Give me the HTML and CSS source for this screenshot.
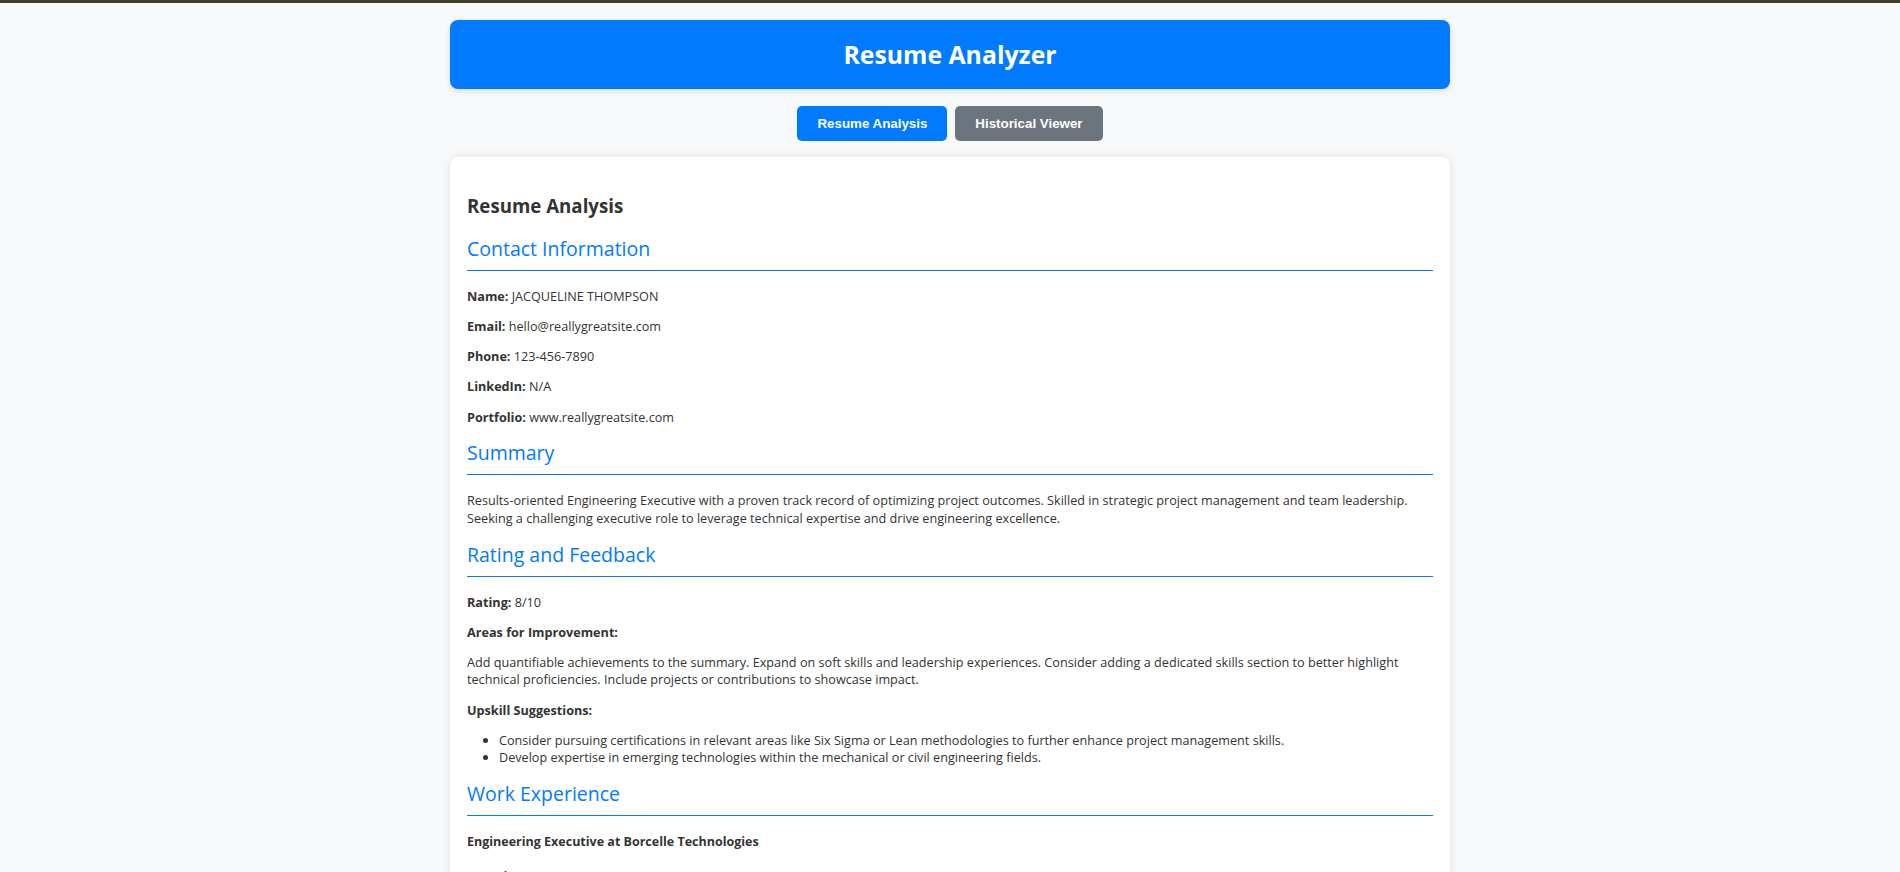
FILE: index.html
```html
<!DOCTYPE html>
<html lang="en">
<head>
<meta charset="utf-8">
<title>Resume Analyzer</title>
<link rel="stylesheet" href="styles.css">
</head>
<body>
<div class="topbar"></div>
<div class="container">
  <header class="app-header">
    <h1>Resume Analyzer</h1>
  </header>
  <nav class="tabs">
    <button class="tab tab-active">Resume Analysis</button>
    <button class="tab tab-muted">Historical Viewer</button>
  </nav>
  <main class="card">
    <h2 class="card-title">Resume Analysis</h2>

    <h3 class="section-title">Contact Information</h3>
    <p><strong>Name:</strong> JACQUELINE THOMPSON</p>
    <p><strong>Email:</strong> hello@reallygreatsite.com</p>
    <p><strong>Phone:</strong> 123-456-7890</p>
    <p><strong>LinkedIn:</strong> N/A</p>
    <p><strong>Portfolio:</strong> www.reallygreatsite.com</p>

    <h3 class="section-title">Summary</h3>
    <p>Results-oriented Engineering Executive with a proven track record of optimizing project outcomes. Skilled in strategic project management and team leadership. Seeking a challenging executive role to leverage technical expertise and drive engineering excellence.</p>

    <h3 class="section-title">Rating and Feedback</h3>
    <p><strong>Rating:</strong> 8/10</p>
    <p><strong>Areas for Improvement:</strong></p>
    <p>Add quantifiable achievements to the summary. Expand on soft skills and leadership experiences. Consider adding a dedicated skills section to better highlight technical proficiencies. Include projects or contributions to showcase impact.</p>
    <p><strong>Upskill Suggestions:</strong></p>
    <ul>
      <li>Consider pursuing certifications in relevant areas like Six Sigma or Lean methodologies to further enhance project management skills.</li>
      <li>Develop expertise in emerging technologies within the mechanical or civil engineering fields.</li>
    </ul>

    <h3 class="section-title">Work Experience</h3>
    <h4 class="job-title">Engineering Executive at Borcelle Technologies</h4>
    <p><strong>Duration:</strong> Jan 2020 - Present</p>
    <ul>
      <li>Led cross-functional engineering teams to deliver projects on time and within budget.</li>
      <li>Implemented process improvements that increased project efficiency.</li>
    </ul>
  </main>
</div>
</body>
</html>
```
FILE: styles.css
```css
* { box-sizing: border-box; }

html, body {
  margin: 0;
  padding: 0;
}

body {
  background: #f8f9fa;
  color: #333;
  font-family: "Open Sans", "Noto Sans", sans-serif;
  font-size: 12.65px;
  line-height: 17.3px;
}

.topbar {
  height: 3px;
  background: #433e27;
}

.container {
  width: 1000px;
  margin: 0 auto;
  padding-top: 17px;
  padding-bottom: 20px;
}

.app-header {
  background: #007bff;
  color: #fff;
  border-radius: 8px;
  box-shadow: 0 2px 6px rgba(0, 0, 0, 0.12);
  padding: 17px;
  text-align: center;
}

.app-header h1 {
  margin: 0;
  font-size: 24.8px;
  line-height: 35px;
  font-weight: 700;
}

.tabs {
  display: flex;
  justify-content: center;
  gap: 8px;
  margin: 17px 0 16px;
}

.tab {
  font-family: "Liberation Sans", Arial, sans-serif;
  font-size: 13.33px;
  font-weight: 700;
  line-height: 15px;
  padding: 10px 20px;
  border: none;
  border-radius: 5px;
  color: #fff;
  cursor: pointer;
}

.tab-active { background: #007bff; }
.tab-muted { background: #6c757d; }

.card {
  display: block;
  background: #fff;
  border-radius: 8px;
  box-shadow: 0 0 10px rgba(0, 0, 0, 0.1);
  padding: 17px;
}

.card-title {
  font-size: 18.7px;
  line-height: 26px;
  font-weight: 700;
  color: #333;
  margin: 18.5px 0 17px;
}

.section-title {
  font-size: 19.5px;
  line-height: 26px;
  font-weight: 400;
  color: #007bff;
  margin: 14.5px 0 17px;
  padding-bottom: 8px;
  border-bottom: 1px solid #007bff;
}

.card p {
  margin: 13px 0;
}

.card ul {
  margin: 13px 0;
  padding-left: 32px;
}

.job-title {
  font-size: 12.5px;
  font-weight: 700;
  margin: 17.3px 0;
}
```
